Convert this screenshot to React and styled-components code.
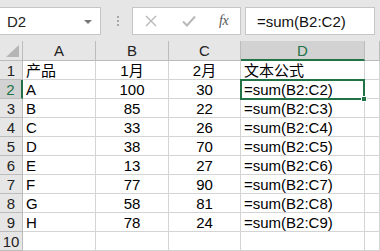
import React from "react";
import styled, { createGlobalStyle } from "styled-components";

const Global = createGlobalStyle`
  html, body { margin: 0; padding: 0; background: #e6e6e6; }
  body { font-family: "Liberation Sans", Arial, sans-serif; overflow: hidden; }
  * { box-sizing: border-box; }
`;

const Page = styled.div`
  width: 380px;
  height: 251px;
  background: #e6e6e6;
  display: flex;
  flex-direction: column;
  overflow: hidden;
`;

const Toolbar = styled.div`
  height: 44px;
  display: flex;
  align-items: flex-start;
  padding-top: 7px;
`;

const Box = styled.div`
  height: 28px;
  background: #fff;
  border: 1px solid #c6c6c6;
  display: flex;
  align-items: center;
`;

const NameBox = styled(Box)`
  width: 102px;
  margin-left: -1px;
  padding-left: 7px;
  padding-right: 8px;
  justify-content: space-between;
  font-size: 15px;
  color: #222;
`;

const Caret = styled.span`
  width: 0;
  height: 0;
  border-left: 4px solid transparent;
  border-right: 4px solid transparent;
  border-top: 4px solid #777;
  margin-top: 1px;
`;

const Grip = styled.div`
  width: 31px;
  height: 28px;
  display: flex;
  flex-direction: column;
  align-items: center;
  justify-content: center;
  gap: 2px;
  padding-left: 2px;
`;

const Dot = styled.span`
  width: 2px;
  height: 2px;
  background: #a8a8a8;
`;

const ButtonBox = styled(Box)`
  width: 109px;
  padding-left: 12px;
  gap: 0;
`;

const IconSlot = styled.span`
  width: 37px;
  display: flex;
  align-items: center;
`;

const Fx = styled.span`
  font-family: "Liberation Serif", "Times New Roman", serif;
  font-style: italic;
  font-size: 14px;
  color: #555;
  letter-spacing: -0.5px;
  margin-left: 0px;
`;

const FormulaBox = styled(Box)`
  width: 130px;
  margin-left: 4px;
  padding-left: 11px;
  font-size: 15px;
  color: #111;
`;

const Sheet = styled.div`
  position: relative;
  display: grid;
  grid-template-columns: 23px 73px 73px 72px 124px 1fr;
  grid-auto-rows: 19px;
  grid-template-rows: 20px;
  background: #fff;
  flex: 1;
`;

const ColHead = styled.div`
  background: ${(p) => (p.$active ? "#d2d2d2" : "#e6e6e6")};
  border-right: 1px solid #bcbcbc;
  border-bottom: ${(p) => (p.$active ? "2px solid #217346" : "1px solid #bcbcbc")};
  color: ${(p) => (p.$active ? "#217346" : "#222")};
  font-size: 15px;
  display: flex;
  align-items: center;
  justify-content: center;
  padding-top: ${(p) => (p.$active ? "1px" : "0")};
`;

const Corner = styled(ColHead)`
  justify-content: flex-end;
  align-items: flex-end;
  padding: 0 3px 3px 0;
`;

const RowHead = styled.div`
  background: ${(p) => (p.$active ? "#d2d2d2" : "#e6e6e6")};
  border-right: ${(p) => (p.$active ? "2px solid #217346" : "1px solid #bcbcbc")};
  border-bottom: 1px solid #bcbcbc;
  color: ${(p) => (p.$active ? "#217346" : "#222")};
  font-size: 15px;
  display: flex;
  align-items: center;
  justify-content: center;
  line-height: 1;
`;

const Cell = styled.div`
  border-right: 1px solid #d4d4d4;
  border-bottom: 1px solid #d4d4d4;
  font-size: 15px;
  color: #000;
  display: flex;
  align-items: center;
  justify-content: ${(p) => (p.$center ? "center" : "flex-start")};
  padding-left: ${(p) => (p.$center ? "0" : "3px")};
  white-space: nowrap;
  line-height: 1;
  font-family: "Liberation Sans", Arial, "Noto Sans CJK SC", sans-serif;
`;

const Selection = styled.div`
  position: absolute;
  left: 240px;
  top: 38px;
  width: 125px;
  height: 21px;
  border: 2px solid #217346;
  pointer-events: none;
`;

const Handle = styled.div`
  position: absolute;
  right: -4px;
  bottom: -4px;
  width: 6px;
  height: 6px;
  background: #217346;
  border: 1px solid #fff;
`;

const rows = [
  ["产品", "1月", "2月", "文本公式"],
  ["A", "100", "30", "=sum(B2:C2)"],
  ["B", "85", "22", "=sum(B2:C3)"],
  ["C", "33", "26", "=sum(B2:C4)"],
  ["D", "38", "70", "=sum(B2:C5)"],
  ["E", "13", "27", "=sum(B2:C6)"],
  ["F", "77", "90", "=sum(B2:C7)"],
  ["G", "58", "81", "=sum(B2:C8)"],
  ["H", "78", "24", "=sum(B2:C9)"],
  ["", "", "", ""],
];

export default function App() {
  return (
    <Page>
      <Global />
      <Toolbar>
        <NameBox>
          <span>D2</span>
          <Caret />
        </NameBox>
        <Grip>
          <Dot />
          <Dot />
          <Dot />
        </Grip>
        <ButtonBox>
          <IconSlot>
            <svg width="12" height="12" viewBox="0 0 12 12">
              <path d="M1 1 L11 11 M11 1 L1 11" stroke="#b9b9b9" strokeWidth="1.4" fill="none" />
            </svg>
          </IconSlot>
          <IconSlot>
            <svg width="14" height="12" viewBox="0 0 14 12">
              <path d="M1 6.5 L5 10.5 L13 1.5" stroke="#b9b9b9" strokeWidth="2" fill="none" />
            </svg>
          </IconSlot>
          <Fx>fx</Fx>
        </ButtonBox>
        <FormulaBox>=sum(B2:C2)</FormulaBox>
      </Toolbar>
      <Sheet>
        <Corner>
          <svg width="13" height="12" viewBox="0 0 13 12">
            <polygon points="13,0 13,12 0,12" fill="#b5b5b5" />
          </svg>
        </Corner>
        {["A", "B", "C", "D", ""].map((c) => (
          <ColHead key={c || "E"} $active={c === "D"}>
            {c}
          </ColHead>
        ))}
        {rows.map((r, i) => (
          <React.Fragment key={i}>
            <RowHead $active={i === 1}>{i + 1}</RowHead>
            <Cell>{r[0]}</Cell>
            <Cell $center>{r[1]}</Cell>
            <Cell $center>{r[2]}</Cell>
            <Cell>{r[3]}</Cell>
            <Cell />
          </React.Fragment>
        ))}
        <Selection>
          <Handle />
        </Selection>
      </Sheet>
    </Page>
  );
}
